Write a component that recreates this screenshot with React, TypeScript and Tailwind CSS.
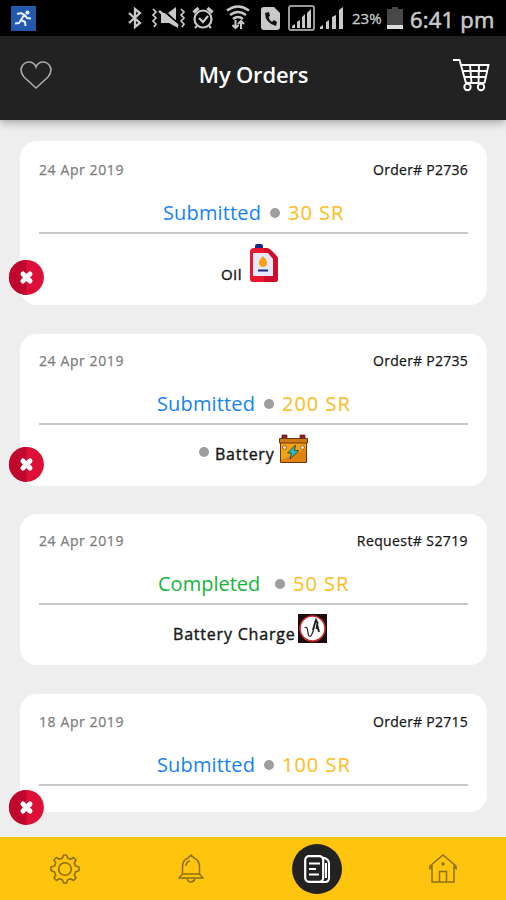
import type { ReactNode } from 'react';

type Order = {
  date: string;
  code: string;
  codeClass: string;
  status: string;
  statusClass: string;
  price: string;
  cardClass: string;
  cancelClass?: string;
  item?: ReactNode;
};

function OilIcon() {
  return (
    <svg width="30" height="41" viewBox="0 0 30 41">
      <path d="M6 6V3q0-2 2-2h4q2 0 2 2v3z" fill="#172b85" />
      <path d="M5 5h12l12 10v21q0 3-3 3H4q-3 0-3-3V9q0-4 4-4z" fill="#ea1730" />
      <path d="M15 5h3q2 0 4 2l5 5q2 2 2 5v19q0 3-3 3H15z" fill="#cf0d2d" />
      <path d="M4 10h15l5 6v17H4z" fill="#e6e9fb" />
      <path d="M14 13q5 5 4 8-1 3-4 3t-4-3q-1-3 4-8z" fill="#f7a11b" />
      <path d="M9 27.500h10" stroke="#172b85" strokeWidth="2" />
    </svg>
  );
}

function BatteryIcon() {
  return (
    <svg width="29" height="30" viewBox="0 0 29 30">
      <path d="M3 1h5v4H3zM21 1h5v4h-5z" fill="#941f1e" stroke="#5c1a16" strokeWidth=".7" />
      <path d="M1.500 6h26v22.500h-26z" fill="#f5a314" stroke="#6b3510" />
      <path d="M2 26L27 15v13H2z" fill="#e0830e" />
      <path d="M.5 4.500h28v4.500H.5z" fill="#cf7a12" stroke="#6b3510" />
      <circle cx="5.500" cy="13.500" r="2" fill="#f2dfb0" stroke="#80501e" strokeWidth=".8" />
      <circle cx="23.500" cy="13.500" r="2" fill="#f2dfb0" stroke="#80501e" strokeWidth=".8" />
      <path d="M16.500 11l-8 8h4l-1.500 6 9-8.500h-4.500l1-5.500z" fill="#21bfc6" stroke="#3b4026" strokeWidth=".9" />
    </svg>
  );
}

function ChargeIcon() {
  return (
    <svg width="29" height="29" viewBox="0 0 29 29">
      <path d="M0 0h29v29H0z" fill="#1d0c0e" />
      <circle cx="14.500" cy="14.500" r="12.500" fill="#fff" stroke="#c52b32" strokeWidth="1.6" />
      <path d="M6.500 13.500q2.500-1 3 2t.8 5q1.500 4 3.500 0t2-8" fill="none" stroke="#222" strokeWidth="1.2" />
      <path d="M15 16l2-7 1-3 1.500 3-1 6M19 10l2 8" fill="none" stroke="#222" strokeWidth="1.9" />
    </svg>
  );
}

function Dot({ className }: { className: string }) {
  return <span className={`h-[10px] w-[10px] shrink-0 rounded-full bg-[#9e9e9e] ${className}`} />;
}

const orders: Order[] = [
  {
    date: '24 Apr 2019',
    code: 'Order# P2736',
    codeClass: 'tracking-[0.25px]',
    status: 'Submitted',
    statusClass: 'ml-[124px] w-[98px] text-[#1683f5] tracking-[0.15px]',
    price: '30 SR',
    cardClass: 'h-[164px] pt-[18px]',
    cancelClass: 'top-[118px]',
    item: (
      <div className="flex items-start pl-[182px] pt-[9px]">
        <span className="mt-[21px] w-[28px] text-[15px] leading-5 tracking-[0.7px] [-webkit-text-stroke:0.4px]">Oil</span>
        <OilIcon />
      </div>
    ),
  },
  {
    date: '24 Apr 2019',
    code: 'Order# P2735',
    codeClass: 'tracking-[0.25px]',
    status: 'Submitted',
    statusClass: 'ml-[118px] w-[98px] text-[#1683f5] tracking-[0.15px]',
    price: '200 SR',
    cardClass: 'mt-[29px] h-[152px] pt-[16px]',
    cancelClass: 'top-[112px]',
    item: (
      <div className="flex items-start pl-[160px] pt-[9px]">
        <Dot className="mt-[13px]" />
        <span className="ml-[6px] mt-[10px] w-[64px] text-[16px] leading-5 tracking-[0.75px] [-webkit-text-stroke:0.4px]">Battery</span>
        <BatteryIcon />
      </div>
    ),
  },
  {
    date: '24 Apr 2019',
    code: 'Request# S2719',
    codeClass: 'tracking-[0.4px]',
    status: 'Completed',
    statusClass: 'ml-[119px] w-[108px] text-[#16b43a]',
    price: '50 SR',
    cardClass: 'mt-[28px] h-[151px] pt-[16px]',
    item: (
      <div className="flex items-start pl-[134px] pt-[9px]">
        <span className="mt-[10px] w-[125px] whitespace-nowrap text-[16px] leading-5 tracking-[0.8px] [-webkit-text-stroke:0.4px]">
          Battery Charge
        </span>
        <ChargeIcon />
      </div>
    ),
  },
  {
    date: '18 Apr 2019',
    code: 'Order# P2715',
    codeClass: 'tracking-[0.25px]',
    status: 'Submitted',
    statusClass: 'ml-[118px] w-[98px] text-[#1683f5] tracking-[0.15px]',
    price: '100 SR',
    cardClass: 'mt-[29px] h-[118px] pt-[17px]',
    cancelClass: 'top-[95px]',
  },
];

function CancelButton({ className }: { className: string }) {
  return (
    <button className={`absolute left-[-12px] h-9 w-9 ${className}`}>
      <svg width="36" height="36" viewBox="0 0 36 36">
        <circle cx="18.400" cy="18.400" r="17.500" fill="#dc1038" />
        <path d="M18.400 .9a17.500 17.500 0 000 35z" fill="#c0082f" />
        <path d="M15 15l7 7M22 15l-7 7" stroke="#fff" strokeWidth="5" strokeLinecap="round" />
      </svg>
    </button>
  );
}

function OrderCard({ order }: { order: Order }) {
  return (
    <div className={`relative rounded-[17px] bg-white px-[19px] ${order.cardClass}`}>
      <div className="flex h-5 items-center justify-between whitespace-nowrap text-[14px] [-webkit-text-stroke:0.25px]">
        <span className="tracking-[0.6px] text-[#7c7c7c]">{order.date}</span>
        <span className={order.codeClass}>{order.code}</span>
      </div>
      <div className="mt-[19px] flex h-[30px] items-center whitespace-nowrap text-[20px]">
        <span className={order.statusClass}>{order.status}</span>
        <Dot className="ml-[8.500px]" />
        <span className="ml-[8.500px] tracking-[1px] text-[#fbbf2d] [-webkit-text-stroke:0.2px]">{order.price}</span>
      </div>
      <div className="mt-[4px] border-t-2 border-[#c8c8c8]" />
      {order.item}
      {order.cancelClass && <CancelButton className={order.cancelClass} />}
    </div>
  );
}

function StatusBar() {
  return (
    <div className="flex h-9 items-center bg-black pl-[11px] text-[#c9c9c9]">
      <svg width="25" height="25" viewBox="0 0 25 25">
        <path d="M0 0h25v25H0z" fill="#2459ae" />
        <circle cx="16.500" cy="6.500" r="2" fill="#e8eefa" />
        <path d="M6 8l4-1 4 2 2 3 4 .5M13 9l-3 5 4 2 .5 4M10 14l-2 3-4 .5" fill="none" stroke="#e8eefa" strokeWidth="2" />
      </svg>
      <svg className="ml-[91px]" width="16" height="22" viewBox="0 0 16 22" fill="none" stroke="currentColor" strokeWidth="2.300">
        <path d="M2 6l11 10-5 4V2l5 4L2 16" />
      </svg>
      <svg className="ml-[9px]" width="34" height="24" viewBox="0 0 34 24">
        <path d="M9 7h4l13 11v4l-9-5H9zM16 7l8-6v14z" fill="currentColor" />
        <path d="M7 5l19 15" stroke="currentColor" strokeWidth="2.500" />
        <path d="M14 7l11 9" stroke="#000" strokeWidth="1.300" />
        <path d="M1 3l3 3-3 3 3 3-3 3 3 3-2 3M29 3l3 3-3 3 3 3-3 3 3 3-2 3" fill="none" stroke="currentColor" strokeWidth="1.700" />
      </svg>
      <svg className="ml-[6px]" width="22" height="24" viewBox="0 0 22 24" fill="none" stroke="currentColor" strokeWidth="2.200">
        <circle cx="11" cy="13" r="8.500" />
        <path d="M7 12l4 4 5-6M5 20l-2 2M17 20l2 2" />
        <path d="M1.500 6.500l5-4.500M15.500 2l5 4.500" strokeWidth="3.200" />
      </svg>
      <svg className="ml-[12px]" width="24" height="26" viewBox="0 0 24 26" fill="none" stroke="currentColor" strokeWidth="2.500">
        <path d="M1 5.500q11-8 22 0M4 10q8-6 16 0M7 14q5-4 10 0" />
        <path d="M9.500 15v8M6.500 20l3 3 3-3M15 24v-8M12 19l3-3 3 3" strokeWidth="2" />
      </svg>
      <svg className="ml-[11px]" width="19" height="23" viewBox="0 0 19 23">
        <path d="M3 0h10l6 6v14q0 3-3 3H3q-3 0-3-3V3q0-3 3-3z" fill="currentColor" />
        <path d="M4 6q0 10 11 13l1-4-3-2-2 2q-3-2-3.500-5l1.500-1-1-4z" fill="#111" />
      </svg>
      <svg className="ml-[8px]" width="27" height="26" viewBox="0 0 27 26">
        <rect x="1" y="1" width="25" height="24" rx="2" fill="none" stroke="#999" strokeWidth="2" />
        <path d="M4 23v-2l3-2v4zM9 23v-6l3-2v8zM14 23V12l3-3v14zM19 23V8l4-4v19z" fill="currentColor" />
      </svg>
      <svg className="ml-[5px]" width="24" height="23" viewBox="0 0 24 23">
        <path d="M0 22v-2l3-2v4zM6 22v-7l3-2v9zM12 22V10l4-2v14zM19 22V3l4-3v22z" fill="currentColor" />
      </svg>
      <span className="ml-[8px] w-[32px] whitespace-nowrap text-[15px] [-webkit-text-stroke:0.3px]">23%</span>
      <svg className="ml-[3px]" width="16" height="22" viewBox="0 0 16 22">
        <path d="M5 0h6v2h5v20H0V2h5z" fill="#484848" />
        <path d="M0 18h16v4H0z" fill="#ddd" />
      </svg>
      <span className="ml-[7px] mt-[3px] whitespace-nowrap text-[22px] tracking-[0.2px] [-webkit-text-stroke:0.6px]">6:41 pm</span>
    </div>
  );
}

function Header() {
  return (
    <header className="relative flex h-[84px] items-center justify-between bg-[#222] pb-[7px] pl-[20px] pr-[16px] shadow-[0_2px_9px_rgba(0,0,0,0.35)]">
      <svg width="32" height="28" viewBox="0 0 32 28" fill="none" stroke="#aaa" strokeWidth="1.600">
        <path d="M16 27L4 16Q-1 10 2.500 4.500 5 1 9 1q5 0 7 5 2-5 7-5 4 0 6.500 3.500Q33 10 28 16z" />
      </svg>
      <h1 className="ml-[3px] text-[22px] font-semibold tracking-[-0.2px] text-white">My Orders</h1>
      <svg width="38" height="34" viewBox="0 0 38 34" fill="none" stroke="#fff" strokeWidth="1.900">
        <path d="M1 2h6.500l6.500 23h18.500M9 7h27.500l-4 18M10.500 13h24.500M12 19h22M18 7l1.500 18M27 7l-.5 18" />
        <circle cx="15.500" cy="29" r="3.200" />
        <circle cx="29" cy="29" r="3.200" />
      </svg>
    </header>
  );
}

function GearIcon() {
  return (
    <svg width="30" height="30" viewBox="0 0 30 30" fill="none" stroke="currentColor" strokeWidth="1.600" strokeLinejoin="round">
      <path d="M12.500 4l1-3h3l1 3 3 1.200L23.500 3.500 26 6l-1.700 3L25.500 12l3.500 1v3.500L25.500 18l-1.200 3L26 24l-2.500 2.500-3-1.700-3 1.200-1 3h-3l-1-3-3-1.200-3 1.700L4 24l1.700-3L4.500 18 1 16.500V13l3.500-1 1.200-3L4 6l2.500-2.500 3 1.700z" />
      <circle cx="15" cy="15" r="6.300" />
    </svg>
  );
}

function BottomNav() {
  return (
    <nav className="grid h-[63px] grid-cols-4 items-center justify-items-center bg-[#ffc40e] pl-[2px] text-[#8b7012]">
      <GearIcon />
      <svg width="26" height="29" viewBox="0 0 26 29" fill="none" stroke="currentColor" strokeWidth="1.500">
        <path d="M10 4l3-3 3 3q5.500 2 5.500 9v7h-17v-7q0-7 5.500-9zM4.500 20L1 24h24l-3.500-4M9 24.500q1 3.500 4 3.500t4-3.500M4.500 20h17M8 12q0-4 4-5" />
      </svg>
      <span className="flex h-[50px] w-[50px] items-center justify-center rounded-full bg-[#222]">
        <svg width="27" height="28" viewBox="0 0 27 28" fill="none" stroke="#fff" strokeWidth="2.200">
          <rect x="1.200" y="1.200" width="18" height="25.600" rx="4" />
          <path d="M18 2.500q7 1 7 6V23q0 4-4 4h-6M22 8v15M5 8.500h11M5 14h7M5 19.500h10" strokeWidth="2" />
        </svg>
      </span>
      <svg width="28" height="29" viewBox="0 0 28 29" fill="none" stroke="currentColor" strokeWidth="1.500">
        <path d="M3 12.500L1 14.500V12L14 1l13 11v2.500l-2-2V28H3zM10.500 28V17.500h7V28" />
        <circle cx="14" cy="10" r="1" />
      </svg>
    </nav>
  );
}

export default function App() {
  return (
    <div className="flex h-[900px] w-[506px] flex-col overflow-hidden bg-[#eee] font-['Open_Sans',sans-serif] text-[#171717]">
      <StatusBar />
      <Header />
      <main className="flex-1 pl-[20px] pr-[19px] pt-[21px]">
        {orders.map((order) => (
          <OrderCard key={order.code} order={order} />
        ))}
      </main>
      <BottomNav />
    </div>
  );
}
